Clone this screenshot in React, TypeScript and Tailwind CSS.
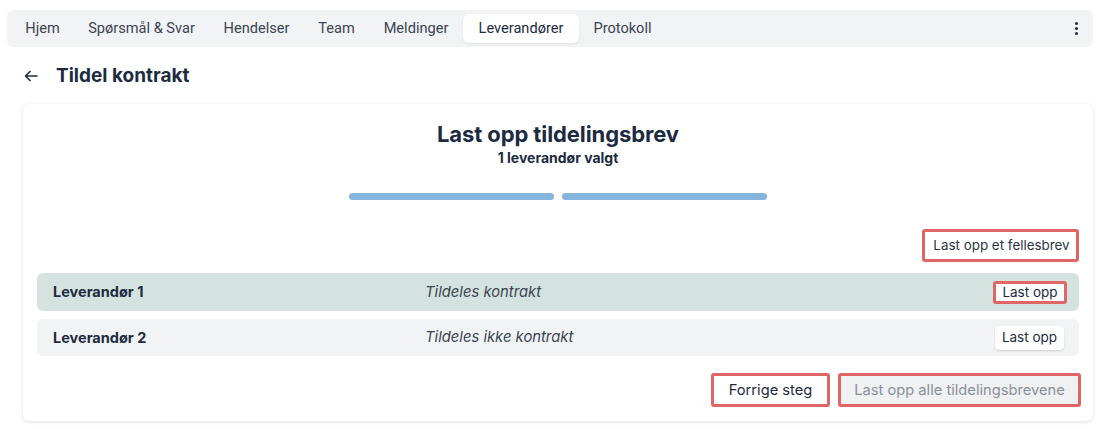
import React from "react";

const tabs: [string, string][] = [
  ["Hjem", "w-[63px]"],
  ["Spørsmål & Svar", "w-[135px]"],
  ["Hendelser", "w-[95px]"],
  ["Team", "w-[65px]"],
  ["Meldinger", "w-[94px]"],
  ["Leverandører", "w-[116px]"],
  ["Protokoll", "w-[87px]"],
];

export default function App() {
  return (
    <div className="w-[1104px] h-[429px] bg-white pt-[10px] pl-[7px] pr-[11px] font-['Inter',sans-serif] text-[#1c2b3f]">
      <nav className="flex h-[37px] items-center rounded-[6px] bg-[#f2f3f5] pl-[4px] pr-[15px]">
        {tabs.map(([t, w]) => (
          <div
            key={t}
            className={
              t === "Leverandører"
                ? `${w} flex h-[29px] items-center justify-center whitespace-nowrap rounded-[6px] bg-white pt-[1px] font-['Roboto',sans-serif] text-[14.6px] text-[#1c2b3f] shadow-[0_1px_2px_rgba(0,0,0,0.08)]`
                : `${w} flex h-[29px] items-center justify-center whitespace-nowrap pt-[1px] font-['Roboto',sans-serif] text-[14.6px] text-[#3a4452]`
            }
          >
            {t}
          </div>
        ))}
        <div className="ml-auto flex flex-col items-center gap-[2px]">
          <span className="block h-[3px] w-[3px] rounded-full bg-[#1c2b3f]" />
          <span className="block h-[3px] w-[3px] rounded-full bg-[#1c2b3f]" />
          <span className="block h-[3px] w-[3px] rounded-full bg-[#1c2b3f]" />
        </div>
      </nav>

      <div className="mt-[18px] flex h-[22px] items-center pl-[17px]">
        <svg width="14" height="12" viewBox="0 0 14 12" fill="none" stroke="#1c2b3f" strokeWidth="1.6" strokeLinecap="round" strokeLinejoin="round">
          <path d="M13 6H1.5M6 1.5L1.5 6L6 10.5" />
        </svg>
        <h1 className="ml-[18px] text-[19px] font-bold">Tildel kontrakt</h1>
      </div>

      <div className="ml-[16px] mt-[17px] rounded-[6px] bg-white px-[14px] pt-[16px] pb-[14px] shadow-[0_1px_4px_rgba(0,0,0,0.12)]">
        <h2 className="text-center text-[22px] font-bold leading-[28px] tracking-[-0.1px]">Last opp tildelingsbrev</h2>
        <p className="mt-[1px] text-center text-[14px] font-bold leading-[18px]">1 leverandør valgt</p>
        <div className="mt-[26px] flex justify-center gap-[8px]">
          <div className="h-[7px] w-[205px] rounded-full bg-[#85b4dd]" />
          <div className="h-[7px] w-[205px] rounded-full bg-[#85b4dd]" />
        </div>

        <div className="mt-[29px] flex justify-end">
          <button className="flex h-[33px] w-[157px] items-center justify-center rounded-[3px] border-[3px] border-[#e06666] bg-white pl-[2px] text-[13.4px] text-[#2b3545]">
            Last opp et fellesbrev
          </button>
        </div>

        <div className="mt-[11px] flex h-[38px] items-center rounded-[6px] bg-[#d5e3e0] pl-[16px] pr-[12px]">
          <span className="w-[372px] text-[14.5px] font-bold">Leverandør 1</span>
          <span className="text-[14.8px] italic text-[#3a4452]">Tildeles kontrakt</span>
          <button className="ml-auto flex h-[23px] w-[74px] items-center justify-center rounded-[3px] border-[3px] border-[#e06666] bg-white text-[13.5px] text-[#1c2b3f]">
            Last opp
          </button>
        </div>

        <div className="mt-[8px] flex h-[37px] items-center rounded-[6px] bg-[#f2f3f5] pl-[16px] pr-[15px]">
          <span className="w-[372px] text-[14.5px] font-bold">Leverandør 2</span>
          <span className="text-[14.8px] italic text-[#3a4452]">Tildeles ikke kontrakt</span>
          <button className="ml-auto flex h-[24px] w-[69px] items-center justify-center rounded-[4px] bg-white text-[13.5px] text-[#1c2b3f] shadow-[0_1px_2px_rgba(0,0,0,0.15)]">
            Last opp
          </button>
        </div>

        <div className="mt-[17px] mr-[-2px] flex justify-end gap-[8px]">
          <button className="flex h-[34px] w-[119px] items-center justify-center rounded-[3px] border-[3px] border-[#e06666] bg-white text-[14.7px] text-[#1c2b3f]">
            Forrige steg
          </button>
          <button className="flex h-[34px] w-[243px] items-center justify-center rounded-[3px] border-[3px] border-[#e06666] bg-[#f0f1f3] text-[14.7px] text-[#8a9099]">
            Last opp alle tildelingsbrevene
          </button>
        </div>
      </div>
    </div>
  );
}
